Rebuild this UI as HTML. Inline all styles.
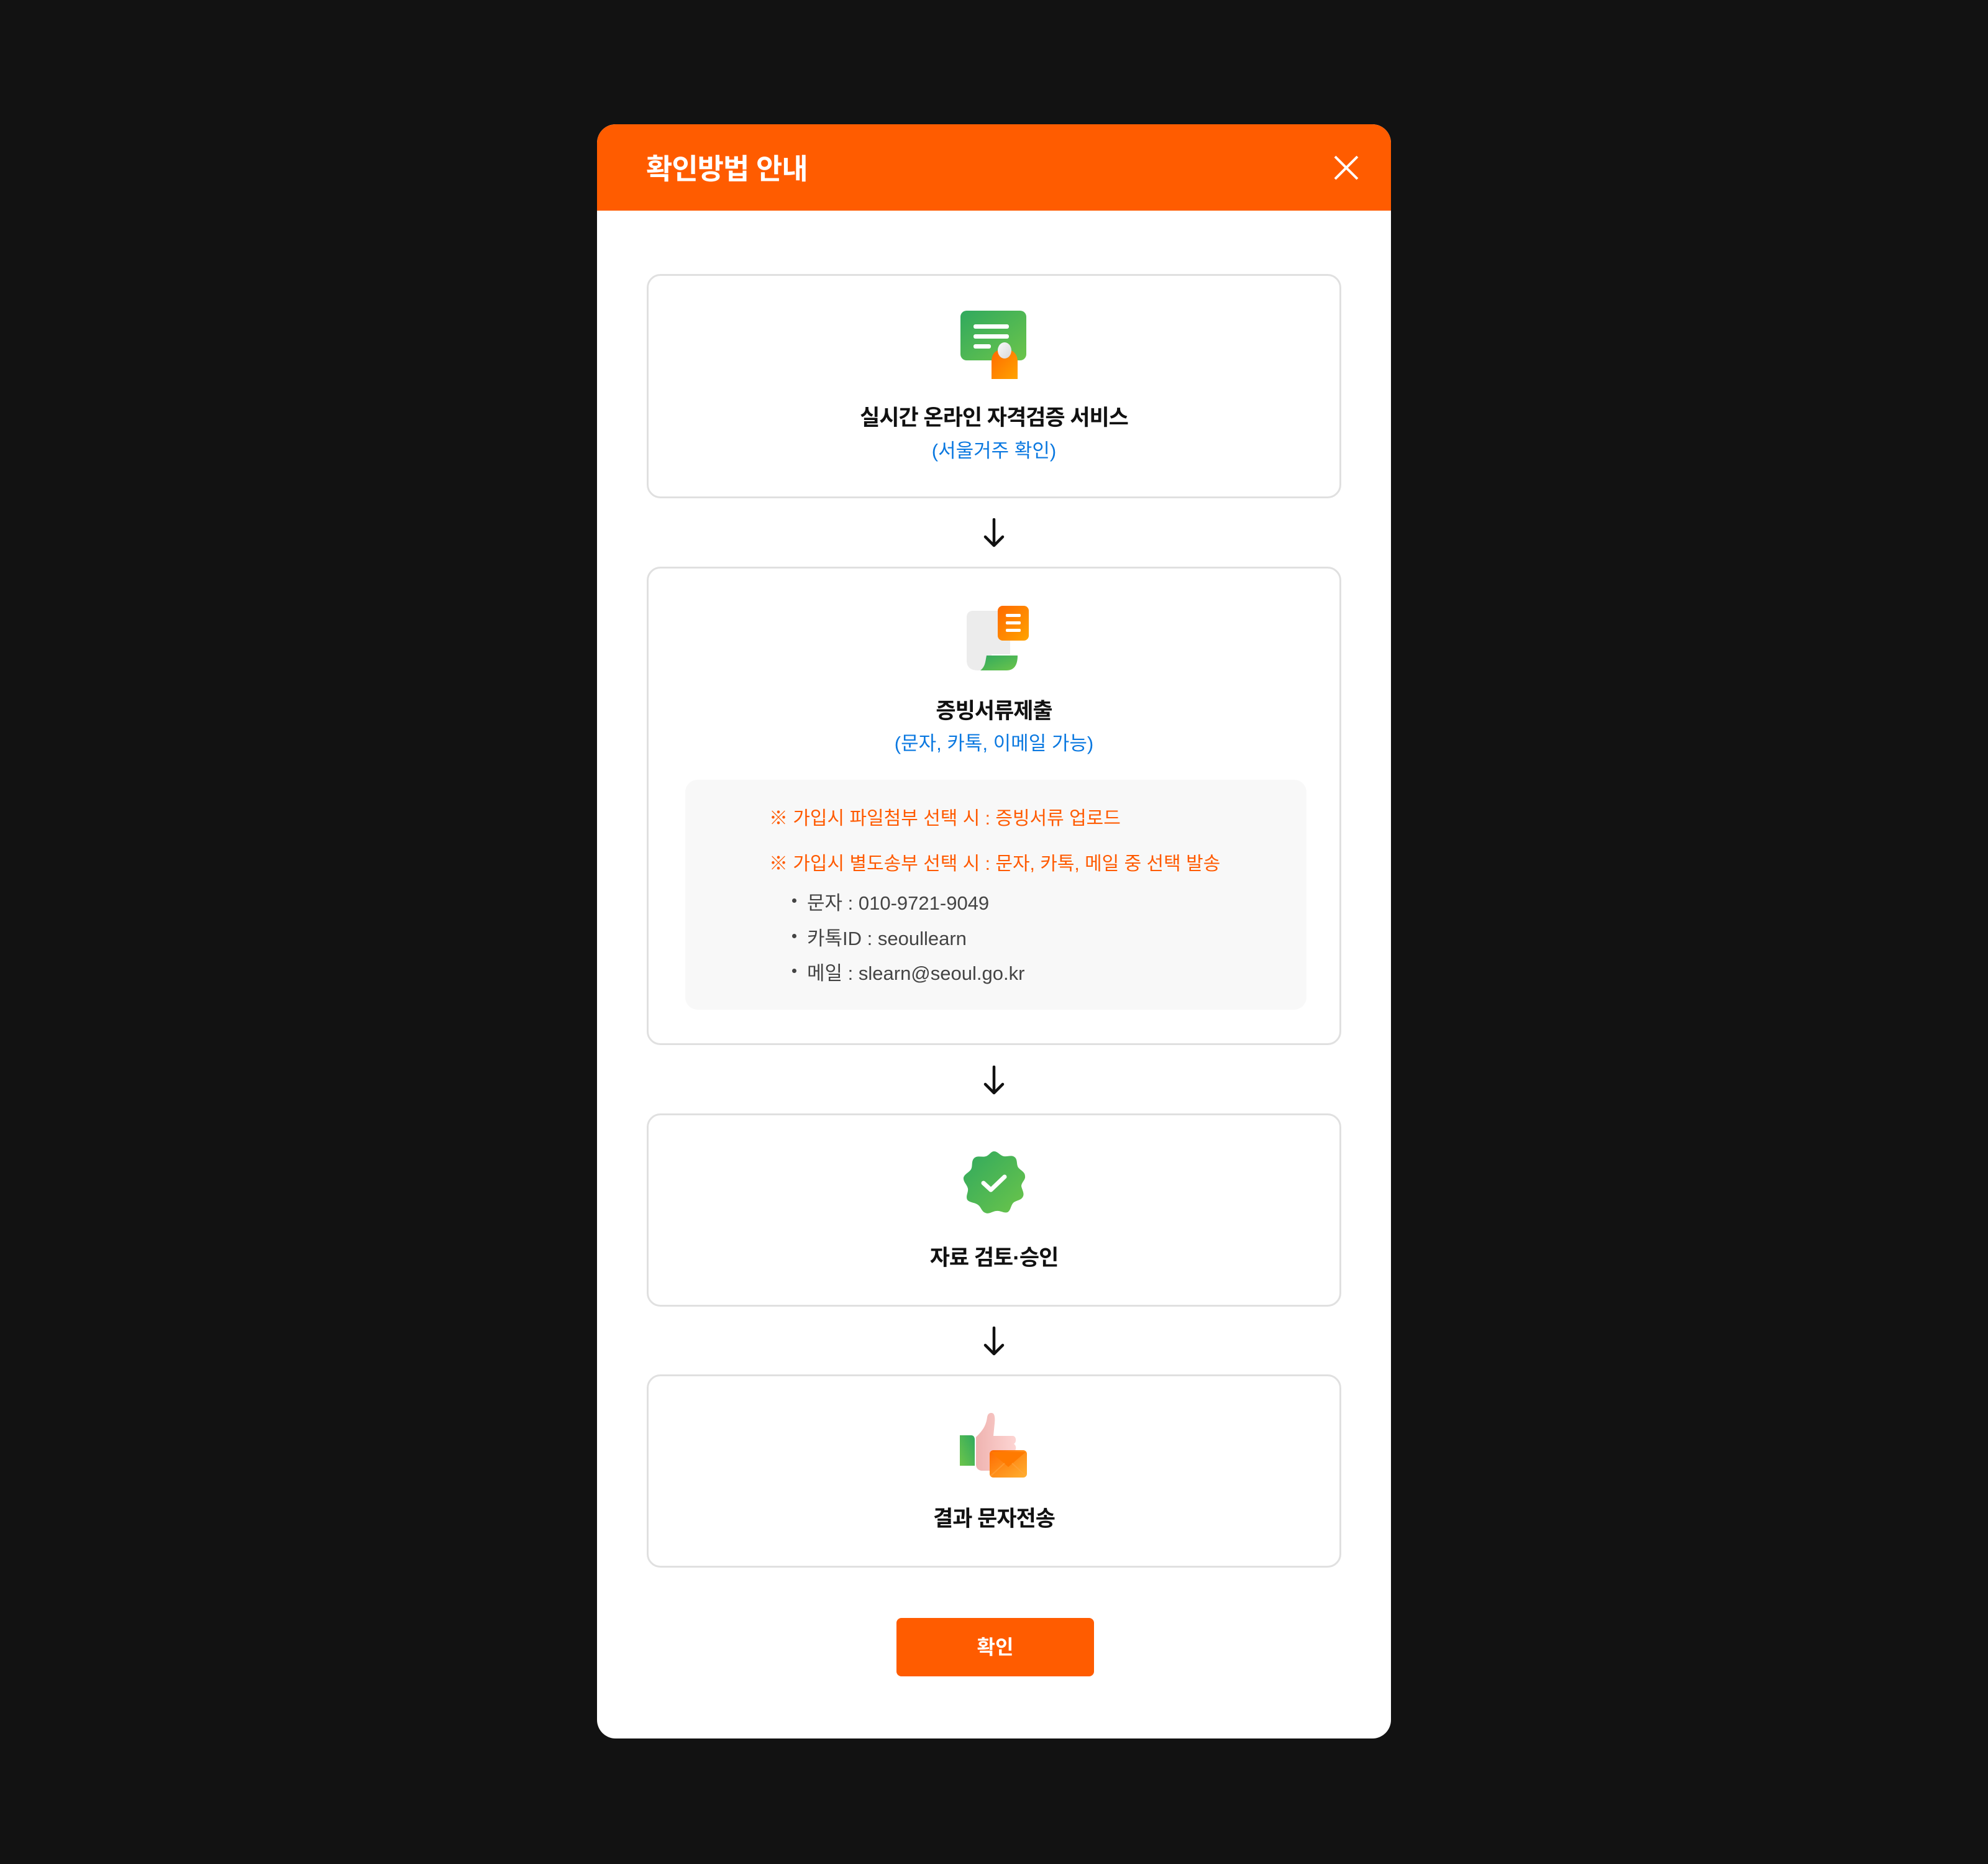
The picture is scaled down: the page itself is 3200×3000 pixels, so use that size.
<!DOCTYPE html>
<html><head><meta charset="utf-8"><style>
*{margin:0;padding:0;box-sizing:border-box}
body{width:3200px;height:3000px;background:#121212;position:relative;font-family:"Liberation Sans","Noto Sans CJK KR",sans-serif;overflow:hidden}
.modal{position:absolute;left:961px;top:200px;width:1278px;height:2598px;background:#fff;border-radius:30px;overflow:hidden}
.hd{position:absolute;left:0;top:0;width:100%;height:139px;background:#ff5c00}
.hd h1{position:absolute;left:79px;top:36px;font-size:46px;font-weight:bold;color:#fff;letter-spacing:-1px}
.card{position:absolute;left:80px;width:1118px;border:3px solid #e0e0e0;border-radius:22px;background:#fff}
.t{position:absolute;left:0;width:100%;text-align:center;font-size:35px;font-weight:bold;color:#111;letter-spacing:-1px}
.s{position:absolute;left:0;width:100%;text-align:center;font-size:31px;color:#0a78e0}
.ab{position:absolute}
.arrow{position:absolute;left:614px;width:50px;height:48px}
.box{position:absolute;left:59px;top:340px;width:1000px;height:370px;background:#f8f8f8;border-radius:20px}
.n{position:absolute;left:135px;font-size:30px;color:#ff5a00;white-space:nowrap}
.b{position:absolute;left:196px;font-size:31px;color:#444;white-space:nowrap}
.b:before{content:"";position:absolute;left:-24px;top:18px;width:7px;height:7px;border-radius:50%;background:#444}
.btn{position:absolute;left:482px;top:2404px;width:318px;height:94px;background:#ff5c00;border-radius:8px;color:#fff;font-size:32px;font-weight:bold;text-align:center;line-height:94px}
</style></head><body>
<div class="modal">
 <div class="hd"><h1>확인방법 안내</h1>
  <svg class="ab" style="left:1186px;top:50px" width="40" height="40" viewBox="0 0 40 40"><path d="M2 2L38 38M38 2L2 38" stroke="#fff" stroke-width="4"/></svg>
 </div>

 <div class="card" style="top:241px;height:361px">
  <svg class="ab" style="left:502px;top:56px" width="108" height="110" viewBox="0 0 108 110">
   <defs><linearGradient id="g1" x1="0" y1="0" x2="1" y2="1"><stop offset="0" stop-color="#30a95e"/><stop offset="1" stop-color="#6cc54a"/></linearGradient>
   <linearGradient id="o1" x1="0" y1="0" x2="1" y2="1"><stop offset="0" stop-color="#ff6a00"/><stop offset="1" stop-color="#ffa300"/></linearGradient>
   <linearGradient id="w1" x1="0" y1="0" x2="1" y2="1"><stop offset="0" stop-color="#fafafa"/><stop offset="1" stop-color="#d8d8d8"/></linearGradient></defs>
   <rect x="0" y="0" width="106" height="80" rx="10" fill="url(#g1)"/>
   <rect x="21" y="22" width="57" height="7" rx="3" fill="#fff"/>
   <rect x="21" y="38" width="57" height="7" rx="3" fill="#fff"/>
   <rect x="21" y="54" width="28" height="7" rx="3" fill="#fff"/>
   <path d="M50 110V82C50 70 56 62 71 62C85 62 92 70 92 82V110Z" fill="url(#o1)"/>
   <ellipse cx="71" cy="64" rx="11" ry="13" fill="url(#w1)"/>
  </svg>
  <div class="t" style="top:200px">실시간 온라인 자격검증 서비스</div>
  <div class="s" style="top:256px">(서울거주 확인)</div>
 </div>
 <svg class="arrow" style="top:634px" viewBox="0 0 50 48"><path d="M25 2V44M11 30L25 44L39 30" stroke="#111" stroke-width="4.5" fill="none" stroke-linecap="round" stroke-linejoin="round"/></svg>

 <div class="card" style="top:712px;height:770px">
  <svg class="ab" style="left:512px;top:60px" width="100" height="104" viewBox="0 0 100 104">
   <defs><linearGradient id="o2" x1="0" y1="0" x2="1" y2="1"><stop offset="0" stop-color="#ff6a00"/><stop offset="1" stop-color="#ffa300"/></linearGradient>
   <linearGradient id="g2" x1="0" y1="0" x2="1" y2="1"><stop offset="0" stop-color="#30a95e"/><stop offset="1" stop-color="#6cc54a"/></linearGradient></defs>
   <path d="M10 8H70V78H10Z" fill="#ececec"/>
   <path d="M0 18C0 12 4 8 10 8H40V104H18C6 104 0 98 0 88Z" fill="#ececec"/>
   <path d="M22 104C30 98 30 90 32 80H82C82 96 76 104 64 104Z" fill="url(#g2)"/>
   <rect x="50" y="0" width="50" height="56" rx="8" fill="url(#o2)"/>
   <rect x="63" y="13" width="24" height="5" rx="2" fill="#fff"/>
   <rect x="63" y="25" width="24" height="5" rx="2" fill="#fff"/>
   <rect x="63" y="37" width="24" height="5" rx="2" fill="#fff"/>
  </svg>
  <div class="t" style="top:201px">증빙서류제출</div>
  <div class="s" style="top:256px">(문자, 카톡, 이메일 가능)</div>
  <div class="box">
   <div class="n" style="top:37px">※ 가입시 파일첨부 선택 시 : 증빙서류 업로드</div>
   <div class="n" style="top:110px">※ 가입시 별도송부 선택 시 : 문자, 카톡, 메일 중 선택 발송</div>
   <div class="b" style="top:173px">문자 : 010-9721-9049</div>
   <div class="b" style="top:230px">카톡ID : seoullearn</div>
   <div class="b" style="top:286px">메일 : slearn@seoul.go.kr</div>
  </div>
 </div>
 <svg class="arrow" style="top:1515px" viewBox="0 0 50 48"><path d="M25 2V44M11 30L25 44L39 30" stroke="#111" stroke-width="4.5" fill="none" stroke-linecap="round" stroke-linejoin="round"/></svg>

 <div class="card" style="top:1592px;height:311px">
  <svg class="ab" style="left:504px;top:56px" width="104" height="104" viewBox="-52 -52 104 104">
   <defs><linearGradient id="g3" x1="0" y1="0" x2="1" y2="1"><stop offset="0" stop-color="#30a95e"/><stop offset="1" stop-color="#6cc54a"/></linearGradient></defs>
   <path d="M0-50 C6-50 10-43 16-42 C22-41 29-45 34-40 C38-36 36-29 39-24 C43-19 50-17 50-10 C51-4 44 0 44 6 C45 12 50 18 46 24 C43 29 35 29 31 33 C27 37 27 45 22 48 C16 50 10 45 4 46 C-2 46 -8 52-14 49 C-20 47-21 39-26 36 C-31 32-39 33-43 28 C-46 22-41 16-42 10 C-43 4-50-1-49-8 C-47-14-40-16-37-21 C-34-26-37-34-32-39 C-27-44-19-40-13-42 C-7-44-5-50 0-50Z" fill="url(#g3)"/>
   <path d="M-17 1L-5 12L17-9" stroke="#fff" stroke-width="7" fill="none" stroke-linecap="round" stroke-linejoin="round"/>
  </svg>
  <div class="t" style="top:201px">자료 검토·승인</div>
 </div>
 <svg class="arrow" style="top:1935px" viewBox="0 0 50 48"><path d="M25 2V44M11 30L25 44L39 30" stroke="#111" stroke-width="4.5" fill="none" stroke-linecap="round" stroke-linejoin="round"/></svg>

 <div class="card" style="top:2012px;height:311px">
  <svg class="ab" style="left:501px;top:56px" width="112" height="112" viewBox="0 0 112 112">
   <defs><linearGradient id="g4" x1="1" y1="0" x2="0" y2="1"><stop offset="0" stop-color="#30a95e"/><stop offset="1" stop-color="#6cc54a"/></linearGradient>
   <linearGradient id="p4" x1="0" y1="0" x2="1" y2="0"><stop offset="0" stop-color="#efb3b0"/><stop offset="1" stop-color="#fdd5d3"/></linearGradient>
   <linearGradient id="o4" x1="0" y1="0" x2="1" y2="1"><stop offset="0" stop-color="#ff6a00"/><stop offset="1" stop-color="#ffb030"/></linearGradient></defs>
   <path d="M0 39H18C22 39 24 42 24 46V88H0Z" fill="url(#g4)"/>
   <path d="M26 42C34 34 42 26 44 10C45 4 48 3 51 3C56 3 57 10 56 20L54 40H85C91 40 92 50 87 53C92 56 91 64 86 66L70 96H36C30 96 26 92 26 86Z" fill="url(#p4)"/>
   <rect x="48" y="63" width="60" height="44" rx="6" fill="url(#o4)"/>
   <path d="M50 66L78 90L106 66Z" fill="#ff7a00"/>
   <path d="M50 104L72 84M106 104L84 84" stroke="#ffa540" stroke-width="2" opacity=".6"/>
  </svg>
  <div class="t" style="top:201px">결과 문자전송</div>
 </div>

 <div class="btn">확인</div>
</div>
</body></html>
